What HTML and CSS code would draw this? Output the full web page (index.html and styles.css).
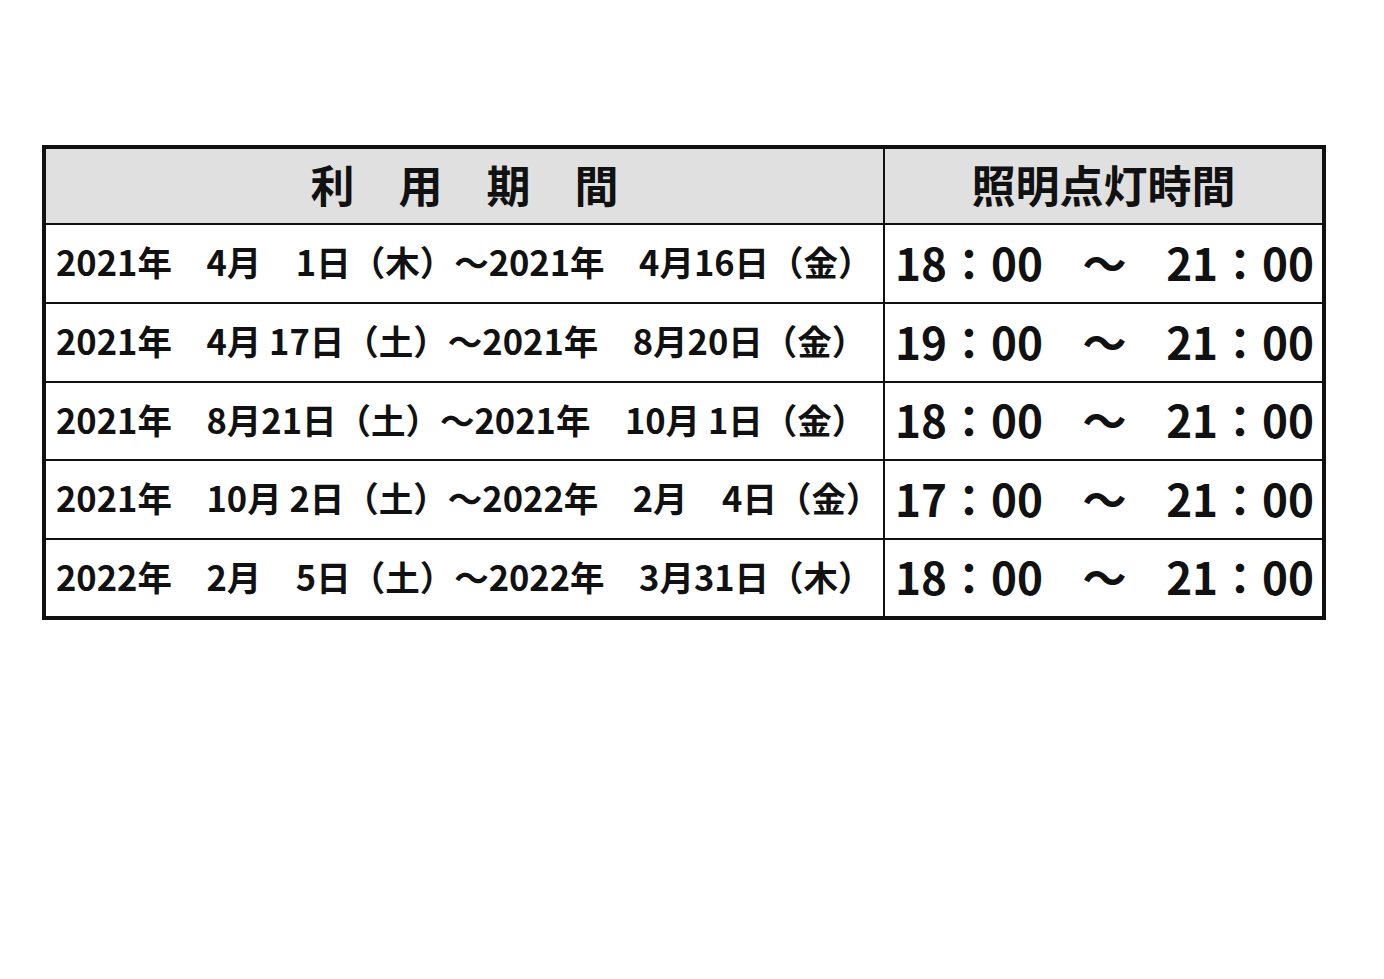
FILE: index.html
```html
<!DOCTYPE html>
<html lang="ja">
<head>
<meta charset="utf-8">
<title>照明点灯時間</title>
<link rel="stylesheet" href="styles.css">
</head>
<body>
<div class="page">
  <div class="schedule">
    <div class="cell head">利　用　期　間</div>
    <div class="cell head">照明点灯時間</div>

    <div class="cell period">2021年　4月　1日（木）～2021年　4月16日（金）</div>
    <div class="cell time"><span>18：00</span><span>～</span><span>21：00</span></div>

    <div class="cell period">2021年　4月 17日（土）～2021年　8月20日（金）</div>
    <div class="cell time"><span>19：00</span><span>～</span><span>21：00</span></div>

    <div class="cell period">2021年　8月21日（土）～2021年　10月 1日（金）</div>
    <div class="cell time"><span>18：00</span><span>～</span><span>21：00</span></div>

    <div class="cell period">2021年　10月 2日（土）～2022年　2月　4日（金）</div>
    <div class="cell time"><span>17：00</span><span>～</span><span>21：00</span></div>

    <div class="cell period">2022年　2月　5日（土）～2022年　3月31日（木）</div>
    <div class="cell time"><span>18：00</span><span>～</span><span>21：00</span></div>
  </div>
</div>
</body>
</html>
```

FILE: styles.css
```css
html, body {
  margin: 0;
  padding: 0;
  background: #ffffff;
}

body {
  font-family: "Noto Sans CJK JP", "Noto Sans", sans-serif;
  color: #111111;
}

.page {
  padding: 145px 0 0 42px;
}

.schedule {
  display: grid;
  grid-template-columns: 837px 437px;
  grid-template-rows: 74px 77px 77px 76px 77px 76px;
  gap: 2px;
  width: 1276px;
  background: #111111;
  border: 4px solid #111111;
}

.cell {
  background: #ffffff;
  display: flex;
  align-items: center;
  white-space: nowrap;
  line-height: 1;
  padding-bottom: 4px;
}

.head {
  background: #e0e0e0;
  justify-content: center;
  font-size: 44px;
  font-weight: 700;
}

.period {
  padding-left: 10px;
  font-size: 34.5px;
  font-weight: 700;
}

.time {
  justify-content: space-between;
  padding-left: 10px;
  padding-right: 8px;
  font-size: 44px;
  font-weight: 700;
}
```
